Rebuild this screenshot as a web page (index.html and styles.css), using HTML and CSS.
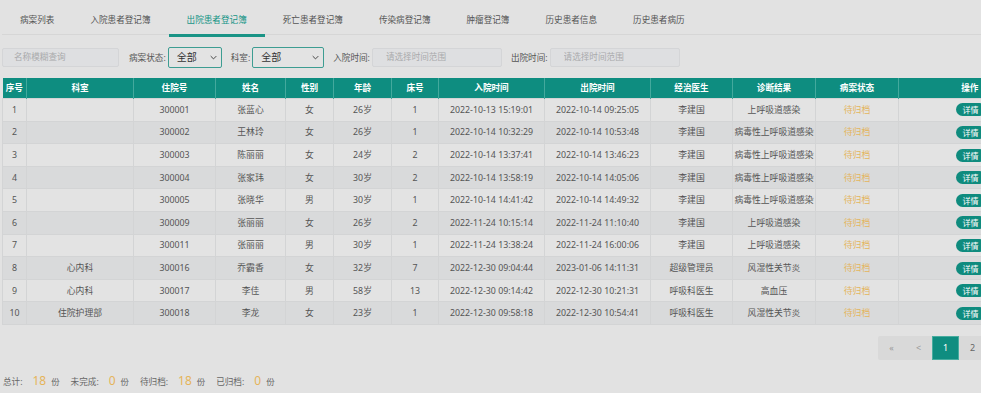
FILE: index.html
```html
<!DOCTYPE html>
<html lang="zh-CN">
<head>
<meta charset="utf-8">
<title>出院患者登记簿</title>
<link rel="stylesheet" href="styles.css">
</head>
<body>
<div class="page">
  <nav class="tabs">
    <a class="tab">病案列表</a>
    <a class="tab">入院患者登记簿</a>
    <a class="tab active">出院患者登记簿</a>
    <a class="tab">死亡患者登记簿</a>
    <a class="tab">传染病登记簿</a>
    <a class="tab">肿瘤登记簿</a>
    <a class="tab">历史患者信息</a>
    <a class="tab">历史患者病历</a>
  </nav>

  <form class="filters">
    <input class="inp name" type="text" placeholder="名称模糊查询">
    <label class="lbl lbl-first">病案状态:</label>
    <span class="sel-wrap w-status">
      <select class="sel"><option>全部</option></select>
      <svg class="chev" viewBox="0 0 10 6" width="7" height="5"><path d="M1 1l4 4 4-4" fill="none" stroke="#444" stroke-width="1.4"/></svg>
    </span>
    <label class="lbl">科室:</label>
    <span class="sel-wrap w-dept">
      <select class="sel"><option>全部</option></select>
      <svg class="chev" viewBox="0 0 10 6" width="7" height="5"><path d="M1 1l4 4 4-4" fill="none" stroke="#444" stroke-width="1.4"/></svg>
    </span>
    <label class="lbl">入院时间:</label>
    <input class="inp date" type="text" placeholder="请选择时间范围">
    <label class="lbl">出院时间:</label>
    <input class="inp date" type="text" placeholder="请选择时间范围">
  </form>

  <table class="grid">
    <colgroup>
      <col style="width:24px"><col style="width:107px"><col style="width:82px"><col style="width:70px">
      <col style="width:48px"><col style="width:58px"><col style="width:47px"><col style="width:106px">
      <col style="width:106px"><col style="width:82px"><col style="width:83px"><col style="width:83px">
      <col style="width:142px">
    </colgroup>
    <thead>
      <tr><th>序号</th><th>科室</th><th>住院号</th><th>姓名</th><th>性别</th><th>年龄</th><th>床号</th><th>入院时间</th><th>出院时间</th><th>经治医生</th><th>诊断结果</th><th>病案状态</th><th>操作</th></tr>
    </thead>
    <tbody>
      <tr><td>1</td><td></td><td>300001</td><td>张蓝心</td><td>女</td><td>26岁</td><td>1</td><td>2022-10-13 15:19:01</td><td>2022-10-14 09:25:05</td><td>李建国</td><td>上呼吸道感染</td><td class="st">待归档</td><td><button class="btn" type="button">详情</button></td></tr>
      <tr><td>2</td><td></td><td>300002</td><td>王林玲</td><td>女</td><td>26岁</td><td>1</td><td>2022-10-14 10:32:29</td><td>2022-10-14 10:53:48</td><td>李建国</td><td>病毒性上呼吸道感染</td><td class="st">待归档</td><td><button class="btn" type="button">详情</button></td></tr>
      <tr><td>3</td><td></td><td>300003</td><td>陈丽丽</td><td>女</td><td>24岁</td><td>2</td><td>2022-10-14 13:37:41</td><td>2022-10-14 13:46:23</td><td>李建国</td><td>病毒性上呼吸道感染</td><td class="st">待归档</td><td><button class="btn" type="button">详情</button></td></tr>
      <tr><td>4</td><td></td><td>300004</td><td>张家玮</td><td>女</td><td>30岁</td><td>2</td><td>2022-10-14 13:58:19</td><td>2022-10-14 14:05:06</td><td>李建国</td><td>病毒性上呼吸道感染</td><td class="st">待归档</td><td><button class="btn" type="button">详情</button></td></tr>
      <tr><td>5</td><td></td><td>300005</td><td>张晓华</td><td>男</td><td>30岁</td><td>1</td><td>2022-10-14 14:41:42</td><td>2022-10-14 14:49:32</td><td>李建国</td><td>病毒性上呼吸道感染</td><td class="st">待归档</td><td><button class="btn" type="button">详情</button></td></tr>
      <tr><td>6</td><td></td><td>300009</td><td>张丽丽</td><td>女</td><td>26岁</td><td>2</td><td>2022-11-24 10:15:14</td><td>2022-11-24 11:10:40</td><td>李建国</td><td>上呼吸道感染</td><td class="st">待归档</td><td><button class="btn" type="button">详情</button></td></tr>
      <tr><td>7</td><td></td><td>300011</td><td>张丽丽</td><td>男</td><td>30岁</td><td>1</td><td>2022-11-24 13:38:24</td><td>2022-11-24 16:00:06</td><td>李建国</td><td>上呼吸道感染</td><td class="st">待归档</td><td><button class="btn" type="button">详情</button></td></tr>
      <tr><td>8</td><td>心内科</td><td>300016</td><td>乔霸香</td><td>女</td><td>32岁</td><td>7</td><td>2022-12-30 09:04:44</td><td>2023-01-06 14:11:31</td><td>超级管理员</td><td>风湿性关节炎</td><td class="st">待归档</td><td><button class="btn" type="button">详情</button></td></tr>
      <tr><td>9</td><td>心内科</td><td>300017</td><td>李佳</td><td>男</td><td>58岁</td><td>13</td><td>2022-12-30 09:14:42</td><td>2022-12-30 10:21:31</td><td>呼吸科医生</td><td>高血压</td><td class="st">待归档</td><td><button class="btn" type="button">详情</button></td></tr>
      <tr><td>10</td><td>住院护理部</td><td>300018</td><td>李龙</td><td>女</td><td>23岁</td><td>1</td><td>2022-12-30 09:58:18</td><td>2022-12-30 10:54:41</td><td>呼吸科医生</td><td>风湿性关节炎</td><td class="st">待归档</td><td><button class="btn" type="button">详情</button></td></tr>
    </tbody>
  </table>

  <div class="pager-row">
    <div class="pager">
      <span class="pg dim">«</span>
      <span class="pg dim">&lt;</span>
      <span class="pg on">1</span>
      <span class="pg">2</span>
      <span class="pg dim">&gt;</span>
      <span class="pg dim">»</span>
    </div>
  </div>

  <div class="summary">
    <span class="k">总计:</span><span class="n">18</span><span class="u">份</span>
    <span class="k">未完成:</span><span class="n">0</span><span class="u">份</span>
    <span class="k">待归档:</span><span class="n">18</span><span class="u">份</span>
    <span class="k">已归档:</span><span class="n">0</span><span class="u">份</span>
  </div>
</div>
</body>
</html>
```

FILE: styles.css
```css
html, body {
  margin: 0;
  padding: 0;
  background: #e2e2e2;
  overflow: hidden;
}
body {
  font-family: "Noto Sans", "Noto Sans CJK SC", sans-serif;
  color: #555;
  font-size: 9px;
}
.page {
  width: 1038px;
  padding: 0 2px;
}

/* tabs */
.tabs {
  display: flex;
  height: 34px;
  border-bottom: 1px solid #d6d6d6;
}
.tab {
  display: flex;
  align-items: center;
  padding: 5px 18px 0;
  height: 29px;
  font-size: 8.6px;
  color: #555;
  border-bottom: 3px solid transparent;
  margin-bottom: -1px;
}
.tab.active {
  color: #159486;
  border-bottom-color: #1a9486;
}

/* filters */
.filters {
  display: flex;
  align-items: center;
  margin-top: 11px;
  height: 22px;
}
.inp {
  box-sizing: border-box;
  height: 19px;
  border: 1px solid #d4d5d7;
  border-radius: 2px;
  background: #dedfe1;
  font: 8.6px "Noto Sans", "Noto Sans CJK SC", sans-serif;
  color: #555;
  padding: 0 0 0 11px;
  outline: none;
}
.inp::placeholder { color: #a9aaac; }
.inp.name { width: 117px; padding-left: 11px; }
.inp.date { width: 130px; padding-left: 13px; }
.lbl {
  font-size: 8.6px;
  color: #555;
  margin: 0 2px 0 9px;
  white-space: nowrap;
}
.lbl-first { margin-left: 10px; }
.sel-wrap {
  position: relative;
  display: inline-block;
  height: 21px;
}
.w-status { width: 54px; }
.w-dept { width: 72px; }
.sel {
  -webkit-appearance: none;
  appearance: none;
  box-sizing: border-box;
  width: 100%;
  height: 21px;
  border: 1px solid #3d9d92;
  border-radius: 2px;
  background: #e3e3e3;
  font: 10px "Noto Sans", "Noto Sans CJK SC", sans-serif;
  color: #333;
  padding: 0 0 0 8px;
  outline: none;
}
.chev {
  position: absolute;
  right: 5px;
  top: 8px;
  pointer-events: none;
}

/* table */
.grid {
  margin-top: 10px;
  border-collapse: collapse;
  table-layout: fixed;
  width: 1038px;
}
.grid th {
  height: 20px;
  background: #0e8d80;
  color: #fff;
  font-weight: bold;
  font-size: 8.6px;
  border-left: 1px solid #43a99d;
  padding: 0;
  text-align: center;
  line-height: 12px;
}
.grid th:first-child { border-left: none; }
.grid td {
  height: 21.6px;
  padding: 0;
  text-align: center;
  font-size: 8.8px;
  line-height: 12px;
  color: #555;
  border: 1px solid #d3d4d5;
  white-space: nowrap;
}
.grid tbody tr:nth-child(odd) td { background: #e3e3e3; }
.grid tbody tr:nth-child(even) td { background: #d9dadb; }
.grid td.st { color: #e4b55c; }
.btn {
  display: inline-block;
  vertical-align: middle;
  border: none;
  background: #0f8b7e;
  color: #fff;
  font: 8px "Noto Sans", "Noto Sans CJK SC", sans-serif;
  height: 13px;
  width: 30px;
  border-radius: 7px;
  padding: 0;
  margin-left: 2px;
  line-height: 13px;
}

/* pager */
.pager-row {
  display: flex;
  justify-content: flex-end;
  margin-top: 11px;
}
.pager {
  display: flex;
  background: #d9d9d9;
  border-radius: 2px;
}
.pg {
  width: 27px;
  height: 24px;
  display: flex;
  align-items: center;
  justify-content: center;
  font-size: 9px;
  color: #666;
}
.pg.dim { color: #999; }
.pg.on {
  background: #0f8d80;
  color: #fff;
  border: 1px solid #47ac9f;
  box-sizing: border-box;
}

/* summary */
.summary {
  display: flex;
  align-items: baseline;
  margin-top: 12px;
  padding-left: 1px;
}
.summary .k { font-size: 8.6px; color: #666; margin-left: 11px; }
.summary .k:first-child { margin-left: 0; }
.summary .n { font-size: 12px; color: #e5b45a; margin-left: 10px; }
.summary .u { font-size: 8.4px; color: #666; margin-left: 5px; }
```
